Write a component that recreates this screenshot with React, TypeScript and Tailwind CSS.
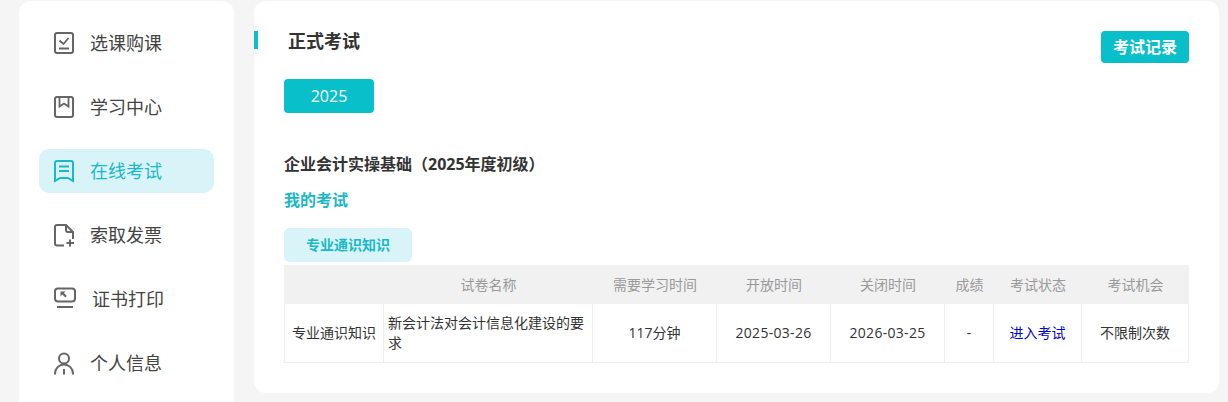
const navItems = [
  { label: '选课购课', icon: 'check' },
  { label: '学习中心', icon: 'book' },
  { label: '在线考试', icon: 'exam', active: true },
  { label: '索取发票', icon: 'invoice' },
  { label: '证书打印', icon: 'print', shift: true },
  { label: '个人信息', icon: 'user' },
];

function NavIcon({ name }: { name: string }) {
  return (
    <svg width="24" height="24" viewBox="0 0 24 24" fill="none" stroke="currentColor" strokeWidth="2" className="shrink-0">
      {name === 'check' && (
        <>
          <rect x="2" y="2" width="18" height="20" rx="2" />
          <path d="M6.500 9.500l4 3.500 5-6M6 17.500h10" strokeWidth="1.800" />
        </>
      )}
      {name === 'book' && (
        <>
          <rect x="2" y="2" width="18" height="20" rx="2" />
          <path d="M6.500 2v9.500l4.500-3 4.500 3V2" strokeWidth="1.800" />
        </>
      )}
      {name === 'exam' && (
        <>
          <path d="M4 2h14a2 2 0 0 1 2 2v18l-5-3H7l-5 3V4a2 2 0 0 1 2-2z" />
          <path d="M6 7.500h10M6 12h10" strokeWidth="1.800" />
        </>
      )}
      {name === 'invoice' && (
        <>
          <path d="M11 22.500H4a2 2 0 0 1-2-2V4a2 2 0 0 1 2-2h9l7 7v7" />
          <path d="M13 2v5a2 2 0 0 0 2 2h5" />
          <path d="M17 16.500v7M13.500 20h7.500" />
        </>
      )}
      {name === 'print' && (
        <>
          <rect x="2" y="1.500" width="20" height="13" rx="3" />
          <path d="M4 20h16" />
          <path d="M7.500 4.500h5l-1.600 1.600 2.900 2.900-1.500 1.400-2.900-2.900-1.900 1.900z" fill="currentColor" stroke="none" />
        </>
      )}
      {name === 'user' && (
        <>
          <circle cx="11" cy="7.500" r="5" />
          <path d="M2 23.500v-1a9 9 0 0 1 18 0v1M11 18v5.500" />
        </>
      )}
    </svg>
  );
}

const headers = ['', '试卷名称', '需要学习时间', '开放时间', '关闭时间', '成绩', '考试状态', '考试机会'];

export default function App() {
  return (
    <div
      className="flex h-[402px] gap-5 overflow-hidden bg-[#f5f5f5] pt-px pl-[19px] pr-[9px] text-[#333]"
      style={{ fontFamily: '"Open Sans", "Noto Sans CJK SC", sans-serif' }}
    >
      {/* Sidebar */}
      <aside className="flex h-[420px] w-[215px] shrink-0 flex-col gap-5 rounded-t-xl bg-white px-5 pt-5">
        {navItems.map((item) => (
          <div
            key={item.label}
            className={
              item.active
                ? 'flex h-11 items-center gap-[13px] rounded-[10px] bg-[#d9f4f9] pl-[14px] text-[#1ab9c7]'
                : 'flex h-11 items-center gap-[13px] rounded-[10px] pl-[14px] text-[#666]'
            }
          >
            <NavIcon name={item.icon} />
            <span className={item.shift ? 'ml-0.5 text-lg text-[#444]' : item.active ? 'text-lg' : 'text-lg text-[#444]'}>
              {item.label}
            </span>
          </div>
        ))}
      </aside>

      {/* Main panel */}
      <main className="h-[392px] min-w-0 flex-1 rounded-xl bg-white pr-[30px]">
        <div className="flex items-start justify-between pt-[30px]">
          <div className="flex items-start gap-[30px]">
            <span className="h-[18px] w-1 bg-[#08bfca]" />
            <h1 className="text-lg leading-5 font-bold">正式考试</h1>
          </div>
          <button className="h-8 w-[88px] rounded bg-[#08bfca] text-base font-bold text-white">考试记录</button>
        </div>

        <div className="pl-[30px]">
          <button className="mt-4 block h-[34px] w-[90px] rounded bg-[#08bfca] text-base text-white">2025</button>
          <h2 className="mt-[39px] text-base leading-6 font-bold">企业会计实操基础（2025年度初级）</h2>
          <h3 className="mt-3 text-base leading-6 font-bold text-[#1ab9c7]">我的考试</h3>
          <div className="mt-4 flex h-[34px] w-32 items-center justify-center rounded-md bg-[#d9f4f9] text-sm font-bold text-[#1ab9c7]">
            专业通识知识
          </div>

          <table className="mt-[3px] w-[905px] table-fixed border-separate border-spacing-0 text-sm">
            <colgroup>
              <col className="w-[100px]" />
              <col className="w-[209px]" />
              <col className="w-[124px]" />
              <col className="w-[114px]" />
              <col className="w-[114px]" />
              <col className="w-[49px]" />
              <col className="w-[88px]" />
              <col className="w-[107px]" />
            </colgroup>
            <thead>
              <tr className="h-[39px] bg-[#f1f1f1] text-[#999]">
                {headers.map((h, i) => (
                  <th key={i} className="font-normal">
                    {h}
                  </th>
                ))}
              </tr>
            </thead>
            <tbody>
              <tr className="h-[59px] text-center">
                <td className="border-x border-b border-[#eee]">专业通识知识</td>
                <td className="border-r border-b border-[#eee] px-1 text-left leading-[20px]">新会计法对会计信息化建设的要求</td>
                <td className="border-r border-b border-[#eee]">117分钟</td>
                <td className="border-r border-b border-[#eee] tracking-[0.3px]">2025-03-26</td>
                <td className="border-r border-b border-[#eee] tracking-[0.3px]">2026-03-25</td>
                <td className="border-r border-b border-[#eee]">-</td>
                <td className="border-r border-b border-[#eee] text-[#0000cc]">进入考试</td>
                <td className="border-r border-b border-[#eee]">不限制次数</td>
              </tr>
            </tbody>
          </table>
        </div>
      </main>
    </div>
  );
}
